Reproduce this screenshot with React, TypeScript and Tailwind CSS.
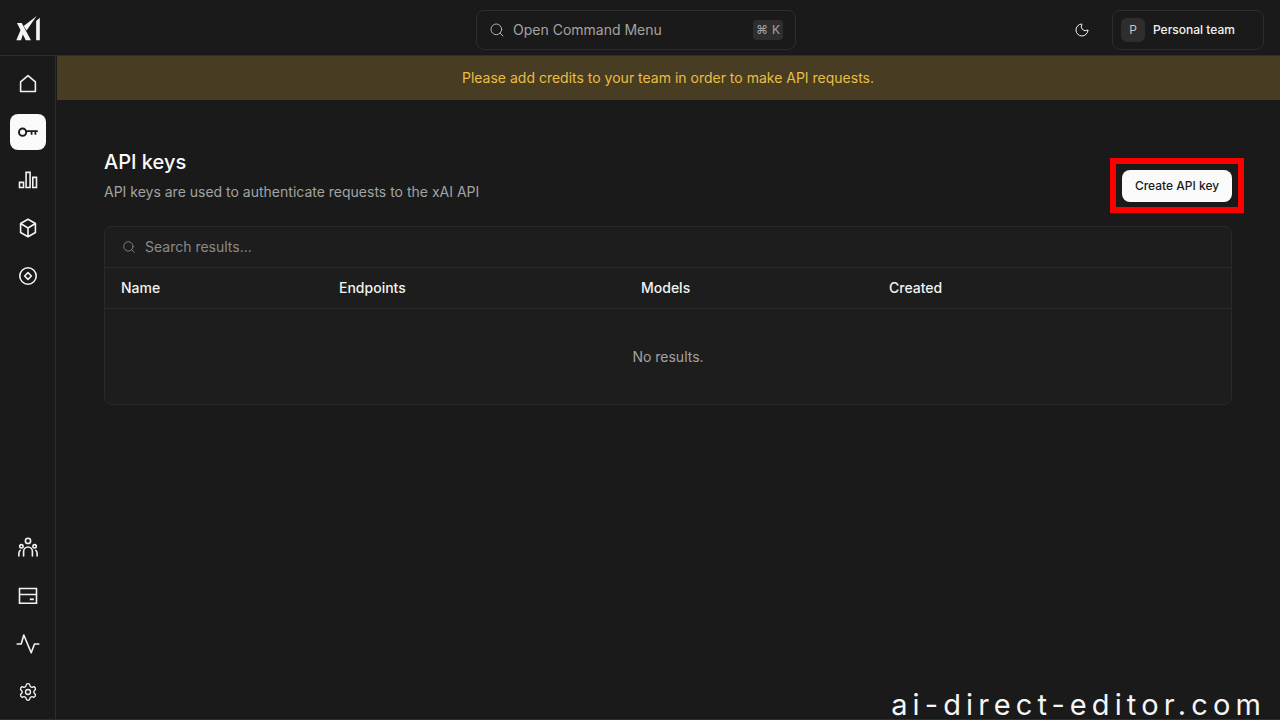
import { Moon, Search, Settings } from "lucide-react";
import type { ReactNode } from "react";

const Icon = ({ children }: { children: ReactNode }) => (
	<svg width={20} height={20} viewBox="0 0 20 20" fill="none" stroke="currentColor" strokeWidth="1.6" strokeLinejoin="round" strokeLinecap="round" className="overflow-visible">
		{children}
	</svg>
);

const topNav = [
	{
		key: "home",
		icon: <path d="M2.6 17.5V7.8L10 1.6l7.4 6.2v9.7z" />,
	},
	{
		key: "keys",
		active: true,
		icon: (
			<>
				<circle cx="4.6" cy="10.2" r="3.6" strokeWidth="2" />
				<path d="M8 9.2h11.8M13.6 9.2v3.5M17.4 9.2v3.5" strokeWidth="1.8" strokeLinecap="butt" />
			</>
		),
	},
	{
		key: "usage",
		icon: <path d="M1.5 12.4h4v5.1h-4zM8.1 2.4h4v15.1h-4zM14.8 7.4h3.7v10.1h-3.7z" strokeLinejoin="miter" />,
	},
	{
		key: "models",
		icon: <path d="M10 1.2l7.4 4.3v9L10 18.8l-7.4-4.3v-9zM2.6 5.5L10 10l7.4-4.5M10 10v8.8" />,
	},
	{
		key: "compass",
		icon: (
			<>
				<circle cx="10" cy="10" r="8.2" />
				<path d="M10 6.6l3.4 3.4-3.4 3.4L6.6 10z" />
			</>
		),
	},
];

const bottomNav = [
	{
		key: "team",
		icon: (
			<>
				<circle cx="10" cy="2.9" r="2.6" />
				<circle cx="3.4" cy="8.3" r="1.7" />
				<circle cx="16.6" cy="8.3" r="1.7" />
				<path d="M5.6 18v-4.6a4.4 4.4 0 0 1 8.8 0V18M0.9 18v-3a3.2 3.2 0 0 1 1.4-2.6M19.1 18v-3a3.2 3.2 0 0 0-1.4-2.6" />
			</>
		),
	},
	{
		key: "billing",
		icon: (
			<>
				<path d="M1.5 2.5h17v14.7h-17zM1.5 8.5h17" strokeLinejoin="miter" />
				<path d="M11.8 13.3h4" strokeWidth="1.8" strokeLinecap="butt" />
			</>
		),
	},
	{
		key: "activity",
		icon: <path d="M-0.8 10h4L5.8 1l7.4 17.7L16.5 10h4.3" />,
	},
];

const NavItem = ({ children, active }: { children: ReactNode; active?: boolean }) => (
	<div className={`flex size-9 items-center justify-center rounded-lg ${active ? "bg-[#fafafa] text-[#1a1a1a]" : "text-[#f2f2f2]"}`}>
		{children}
	</div>
);

export default function App() {
	return (
		<div className="relative flex h-screen w-screen flex-col overflow-hidden border-b border-[#2e2e2e] bg-[#1a1a1a] text-[#fafafa] font-['Inter',sans-serif]">
			<header className="flex h-14 shrink-0 items-center border-b border-[#2e2e2e] pl-4 pr-4 pt-1">
				<svg width="24" height="26" viewBox="0 0 25 26" fill="#f5f5f5" className="-mt-[3px] shrink-0">
					<path d="M1 7.7h5L15.6 25.7h-5.4z" />
					<path d="M0.3 25.7L5 14.5l2.7 3.4-2.4 7.8z" />
					<path d="M8 11L21.5 0.5 11 15.5z" />
					<path d="M21 5.7l3.8-3.4v23.4H21z" />
				</svg>
				<div className="ml-[436px] flex h-10 w-[320px] items-center rounded-lg border border-[#2e2e2e] bg-[#1a1a1a] pl-3 pr-3">
					<Search size={16} strokeWidth={1.5} className="text-[#b4b4b4]" />
					<span className="ml-2 text-sm text-[#a3a3a3]">Open Command Menu</span>
					<span className="ml-auto flex h-5 w-[30px] items-center justify-center gap-1 rounded bg-[#2e2e2e] text-xs text-[#a3a3a3]">
						<span>⌘</span>
						<span>K</span>
					</span>
				</div>
				<Moon size={16} strokeWidth={1.5} className="ml-[278px] text-[#f2f2f2]" />
				<div className="ml-[22px] flex h-10 w-[152px] items-center gap-2 rounded-lg border border-[#2e2e2e] pl-2">
					<span className="flex size-6 items-center justify-center rounded-md bg-[#2e2e2e] text-xs text-[#c4c4c4]">P</span>
					<span className="text-xs font-medium text-[#f2f2f2]">Personal team</span>
				</div>
			</header>

			<div className="flex min-h-0 flex-1">
				<aside className="flex w-14 shrink-0 flex-col items-center justify-between border-r border-[#2e2e2e] pb-[9px] pt-[10px]">
					<nav className="flex flex-col gap-3">
						{topNav.map((item) => (
							<NavItem key={item.key} active={item.active}>
								<Icon>{item.icon}</Icon>
							</NavItem>
						))}
					</nav>
					<nav className="flex flex-col gap-3">
						{bottomNav.map((item) => (
							<NavItem key={item.key}>
								<Icon>{item.icon}</Icon>
							</NavItem>
						))}
						<NavItem>
							<Settings size={20} strokeWidth={1.6} />
						</NavItem>
					</nav>
				</aside>

				<main className="min-w-0 flex-1">
					<div className="ml-px flex h-11 items-center justify-center bg-[#483c22] pr-px text-sm text-[#e9be45]">
						Please add credits to your team in order to make API requests.
					</div>
					<div className="px-12 pt-[50px]">
						<div className="flex items-start justify-between">
							<div>
								<h1 className="text-xl font-medium leading-6 text-[#fafafa]">API keys</h1>
								<p className="mt-2 text-sm leading-5 text-[#a3a3a3]">API keys are used to authenticate requests to the xAI API</p>
							</div>
							<div className="relative mt-5">
								<button className="h-8 w-[110px] rounded-lg bg-[#fafafa] text-xs font-medium text-[#1a1a1a]">Create API key</button>
								<div className="absolute -bottom-[11px] -left-3 -right-3 -top-3 border-[6px] border-[#ff0000]" />
							</div>
						</div>

						<div className="mt-[24px] overflow-hidden rounded-lg border border-[#2a2a2a] bg-[#1d1d1d]">
							<div className="flex h-[41px] items-center gap-[9px] border-b border-[#2a2a2a] pl-[17px]">
								<Search size={14} strokeWidth={1.5} className="text-[#8a8a8a]" />
								<span className="text-sm text-[#8a8a8a]">Search results...</span>
							</div>
							<div className="grid h-[41px] grid-cols-[218px_302px_248px_1fr] items-center border-b border-[#2a2a2a] text-sm font-medium text-[#f2f2f2]">
								<span className="pl-4">Name</span>
								<span className="pl-4">Endpoints</span>
								<span className="pl-4">Models</span>
								<span className="pl-4">Created</span>
							</div>
							<div className="flex h-[95px] items-center justify-center text-sm text-[#a3a3a3]">No results.</div>
						</div>
					</div>
				</main>
			</div>

			<div className="absolute bottom-0 right-[14px] text-[29px] font-normal leading-[28px] tracking-[0.176em] text-[#f5f5f5] font-['Inter',sans-serif]">
				ai-direct-editor.com
			</div>
		</div>
	);
}
